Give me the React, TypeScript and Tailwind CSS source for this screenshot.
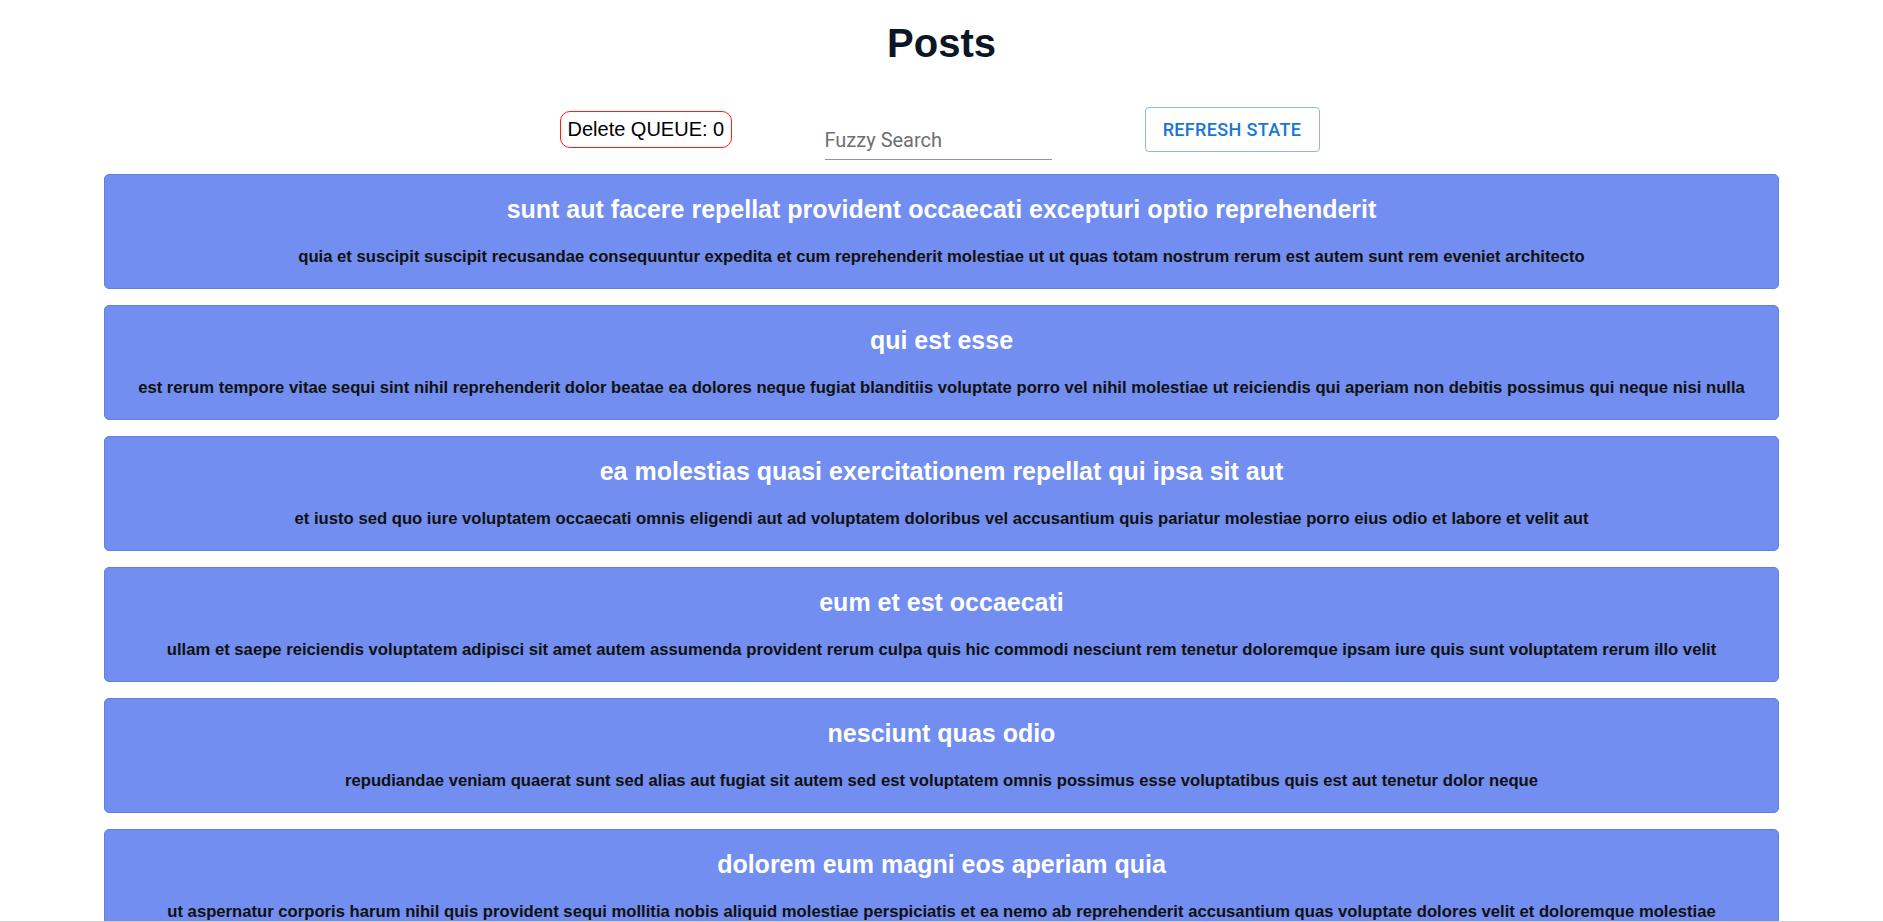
import React from "react";

const posts = [
  {
    title: "sunt aut facere repellat provident occaecati excepturi optio reprehenderit",
    body: "quia et suscipit suscipit recusandae consequuntur expedita et cum reprehenderit molestiae ut ut quas totam nostrum rerum est autem sunt rem eveniet architecto",
  },
  {
    title: "qui est esse",
    body: "est rerum tempore vitae sequi sint nihil reprehenderit dolor beatae ea dolores neque fugiat blanditiis voluptate porro vel nihil molestiae ut reiciendis qui aperiam non debitis possimus qui neque nisi nulla",
  },
  {
    title: "ea molestias quasi exercitationem repellat qui ipsa sit aut",
    body: "et iusto sed quo iure voluptatem occaecati omnis eligendi aut ad voluptatem doloribus vel accusantium quis pariatur molestiae porro eius odio et labore et velit aut",
  },
  {
    title: "eum et est occaecati",
    body: "ullam et saepe reiciendis voluptatem adipisci sit amet autem assumenda provident rerum culpa quis hic commodi nesciunt rem tenetur doloremque ipsam iure quis sunt voluptatem rerum illo velit",
  },
  {
    title: "nesciunt quas odio",
    body: "repudiandae veniam quaerat sunt sed alias aut fugiat sit autem sed est voluptatem omnis possimus esse voluptatibus quis est aut tenetur dolor neque",
  },
  {
    title: "dolorem eum magni eos aperiam quia",
    body: "ut aspernatur corporis harum nihil quis provident sequi mollitia nobis aliquid molestiae perspiciatis et ea nemo ab reprehenderit accusantium quas voluptate dolores velit et doloremque molestiae",
  },
  {
    title: "magnam facilis autem",
    body: "dolore placeat quibusdam ea quo vitae magni quis enim qui quis quo nemo aut saepe quidem repellat excepturi ut quia sunt ut sequi eos ea sed quas",
  },
];

export default function App() {
  return (
    <div className="min-h-screen bg-white font-['Liberation_Sans',Arial,sans-serif]">
      <h1 className="pt-[21px] text-center text-[40px] leading-[45px] font-bold text-[#0d1625]">
        Posts
      </h1>
      <div className="mt-[41px] flex items-start justify-center gap-[93px] pr-[4px]">
        <div className="mt-[4px] flex h-[37px] w-[172px] items-center rounded-[10px] border border-[#ff1a1a] pl-[7px] text-[20px] leading-[23px] text-black">
          Delete QUEUE: 0
        </div>
        <div className="mt-[22px]">
          <input
            placeholder="Fuzzy Search"
            className="block w-[227px] border-b border-[#949494] bg-transparent pb-[7px] font-['Roboto',sans-serif] text-[20px] leading-[23px] text-[#333] outline-none placeholder:text-[#6f6f6f]"
          />
        </div>
        <button className="flex h-[45px] w-[175px] items-center justify-center rounded-[4px] border border-[#8cbae8] bg-white font-['Roboto',sans-serif] text-[18px] leading-[20px] font-medium tracking-[0.02em] text-[#1976d2]">
          REFRESH STATE
        </button>
      </div>
      <div className="mx-auto mt-[14px] flex w-[1675px] flex-col gap-[16px] pb-[16px]">
        {posts.map((p, i) => (
          <div
            key={i}
            className="rounded-[5px] border border-[#5f7fe2] bg-[#718ef0] px-[16px] pt-[20px] pb-[22px] text-center"
          >
            <h2 className="text-[25px] leading-[29px] font-bold text-white">{p.title}</h2>
            <p className="mt-[23px] text-[16.67px] leading-[19px] font-bold text-[#111]">{p.body}</p>
          </div>
        ))}
      </div>
      <div className="fixed bottom-0 left-0 h-px w-full bg-[#d0d0d0]" />
    </div>
  );
}
